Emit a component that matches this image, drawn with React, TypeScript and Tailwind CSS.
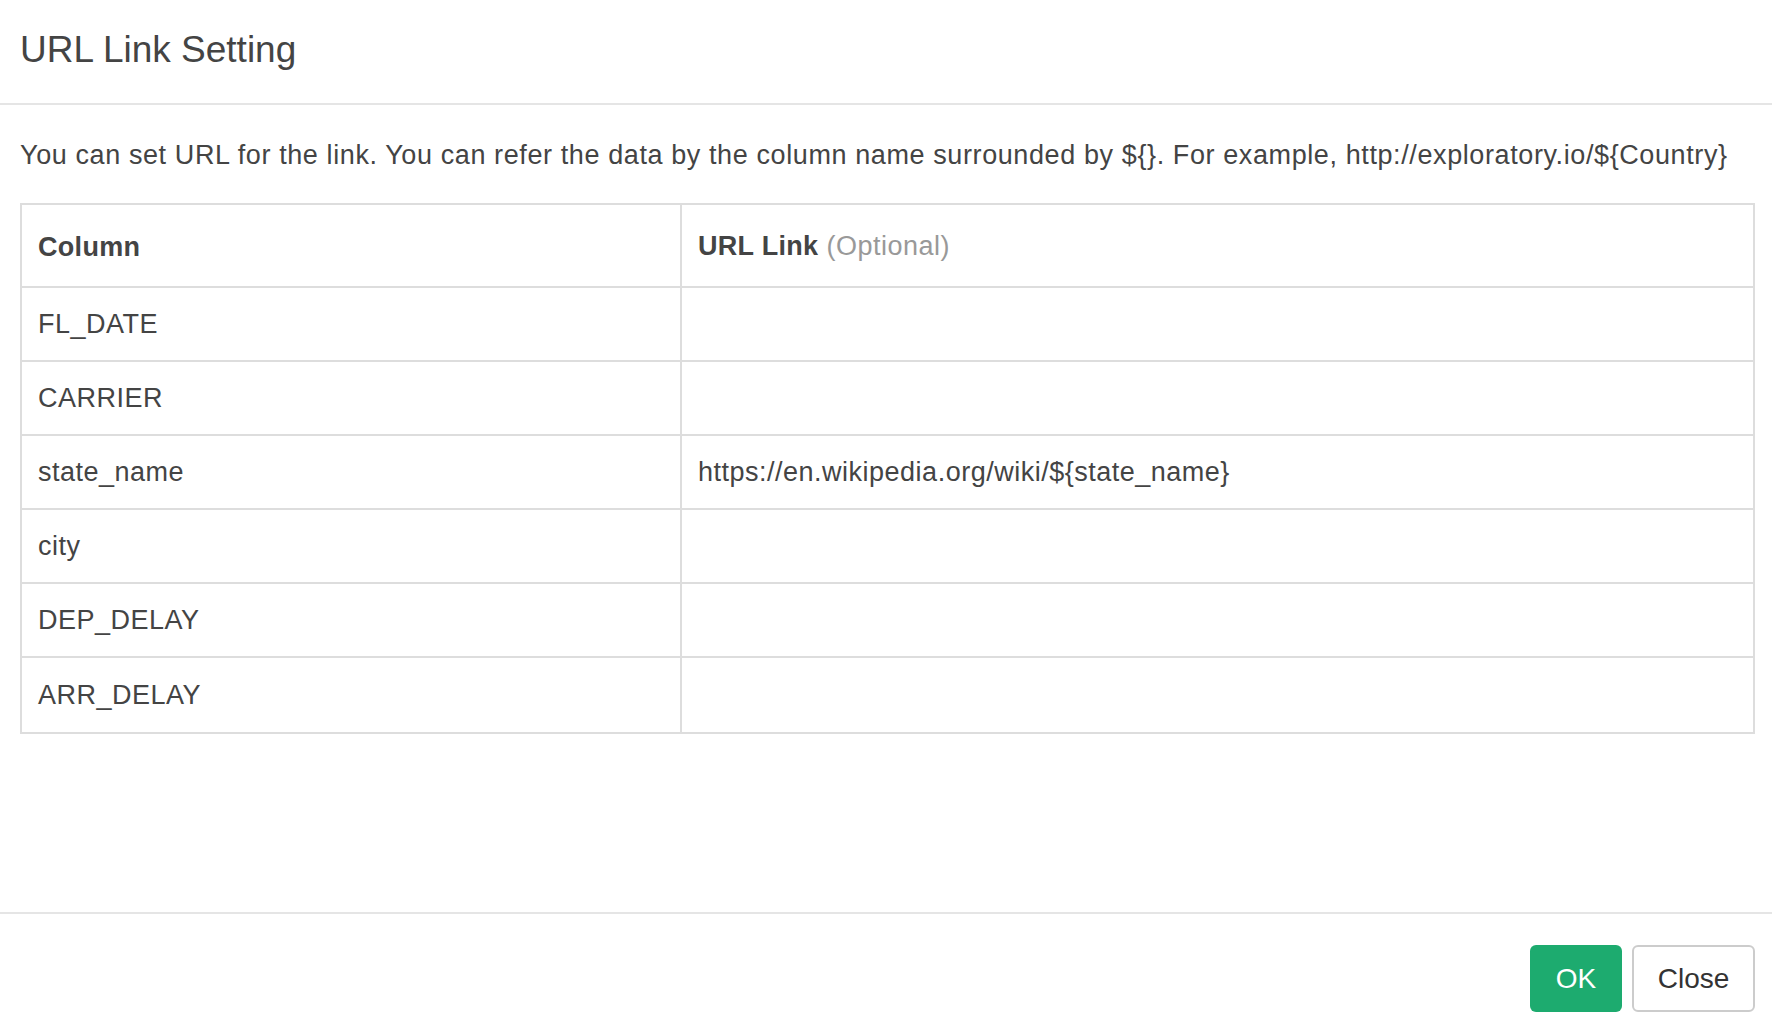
const rows = [
  { column: 'FL_DATE', url: '' },
  { column: 'CARRIER', url: '' },
  { column: 'state_name', url: 'https://en.wikipedia.org/wiki/${state_name}' },
  { column: 'city', url: '' },
  { column: 'DEP_DELAY', url: '' },
  { column: 'ARR_DELAY', url: '' },
]

export default function App() {
  return (
    <div
      className="flex h-[1032px] w-[1772px] flex-col bg-white text-[#444]"
      style={{ fontFamily: '"Liberation Sans", Arial, sans-serif' }}
    >
      <div className="flex h-[105px] shrink-0 items-center border-b-2 border-[#e5e5e5] px-5 pb-[4px]">
        <h1 className="text-[37px] font-medium text-[#444]">URL Link Setting</h1>
      </div>

      <div className="flex-1 pl-5 pr-[17px]">
        <p className="mt-[34px] mb-[32px] text-[27px] leading-[32px] tracking-[0.6px] text-[#444]">
          You can set URL for the link. You can refer the data by the column name surrounded by {'${}'}. For
          example, http://exploratory.io/{'${Country}'}
        </p>

        <div className="border-2 border-[#ddd] text-[27px] tracking-[0.5px]">
          <div className="grid h-[83px] grid-cols-[660px_1fr] border-b-2 border-[#ddd]">
            <div className="flex items-center border-r-2 border-[#ddd] px-[16px] pt-[4px] font-bold tracking-[0.3px] text-[#444]">
              Column
            </div>
            <div className="flex items-center px-[16px] pt-[2px]">
              <span className="font-bold tracking-[0.3px] text-[#444]">URL Link</span>
              <span className="ml-[8px] text-[#999]">(Optional)</span>
            </div>
          </div>
          {rows.map((r, i) => (
            <div
              key={r.column}
              className={`grid h-[74px] grid-cols-[660px_1fr] ${i < rows.length - 1 ? 'border-b-2 border-[#ddd]' : ''}`}
            >
              <div className="flex items-center border-r-2 border-[#ddd] px-[16px] pt-[1px] text-[#444]">
                {r.column}
              </div>
              <div className="flex items-center px-[16px] pt-[1px] text-[#444]">{r.url}</div>
            </div>
          ))}
        </div>
      </div>

      <div className="flex h-[120px] shrink-0 items-start justify-end gap-[10px] border-t-2 border-[#e5e5e5] pt-[31px] pr-[17px]">
        <button className="h-[67px] w-[92px] rounded-[6px] bg-[#1dab6f] text-[28px] text-white">OK</button>
        <button className="h-[67px] w-[123px] rounded-[6px] border-2 border-[#ccc] bg-white text-[28px] text-[#333]">
          Close
        </button>
      </div>
    </div>
  )
}
